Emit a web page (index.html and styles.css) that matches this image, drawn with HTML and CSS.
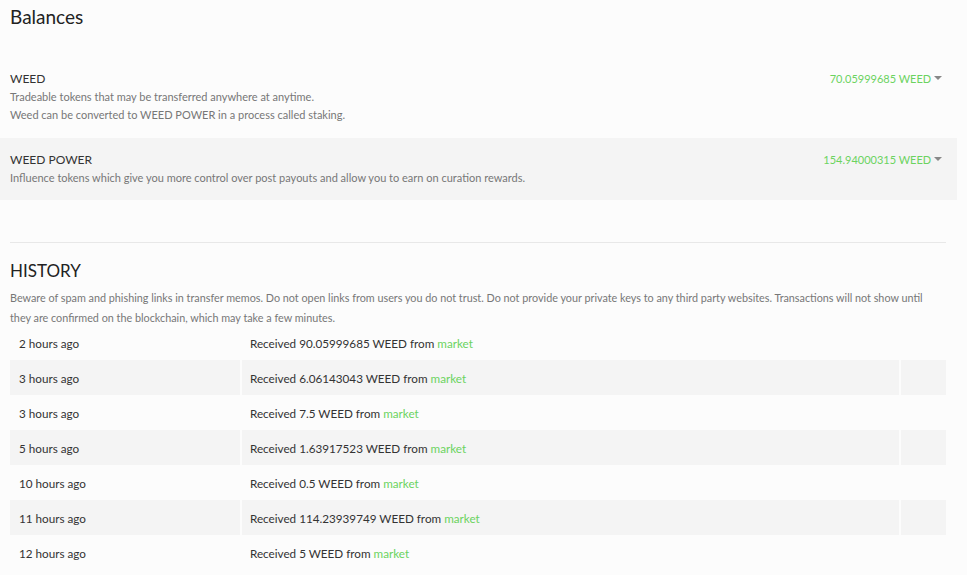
FILE: index.html
```html
<!DOCTYPE html>
<html lang="en">
<head>
    <meta charset="UTF-8">
    <title>Wallet</title>
    <link rel="stylesheet" href="styles.css">
</head>
<body>
    <div class="wallet">
        <h1 class="title">Balances</h1>

        <div class="balance-row">
            <div class="balance-info">
                <div class="balance-name">WEED</div>
                <div class="balance-desc">Tradeable tokens that may be transferred anywhere at anytime.<br>Weed can be converted to WEED POWER in a process called staking.</div>
            </div>
            <div class="balance-amount">70.05999685 WEED <span class="caret"></span></div>
        </div>

        <div class="balance-row shaded">
            <div class="balance-info">
                <div class="balance-name">WEED POWER</div>
                <div class="balance-desc">Influence tokens which give you more control over post payouts and allow you to earn on curation rewards.</div>
            </div>
            <div class="balance-amount">154.94000315 WEED <span class="caret"></span></div>
        </div>

        <div class="history">
            <hr>
            <h2>HISTORY</h2>
            <p class="warning">Beware of spam and phishing links in transfer memos. Do not open links from users you do not trust. Do not provide your private keys to any third party websites. Transactions will not show until they are confirmed on the blockchain, which may take a few minutes.</p>

            <table class="history-table">
                <tr><td>2 hours ago</td><td>Received 90.05999685 WEED from <a href="#">market</a></td><td></td></tr>
                <tr><td>3 hours ago</td><td>Received 6.06143043 WEED from <a href="#">market</a></td><td></td></tr>
                <tr><td>3 hours ago</td><td>Received 7.5 WEED from <a href="#">market</a></td><td></td></tr>
                <tr><td>5 hours ago</td><td>Received 1.63917523 WEED from <a href="#">market</a></td><td></td></tr>
                <tr><td>10 hours ago</td><td>Received 0.5 WEED from <a href="#">market</a></td><td></td></tr>
                <tr><td>11 hours ago</td><td>Received 114.23939749 WEED from <a href="#">market</a></td><td></td></tr>
                <tr><td>12 hours ago</td><td>Received 5 WEED from <a href="#">market</a></td><td></td></tr>
            </table>
        </div>
    </div>
</body>
</html>
```

FILE: styles.css
```css
body {
    margin: 0;
    background: #fcfcfc;
    font-family: 'Lato', sans-serif;
    font-size: 12px;
    color: #333;
}
.wallet {
    width: 957px;
}
.title {
    margin: 0;
    padding: 3px 10px 0;
    height: 54px;
    font-size: 19px;
    font-weight: normal;
    line-height: 28px;
    color: #222;
}
.balance-row {
    display: flex;
    justify-content: space-between;
    padding: 13px 15px 14px 10px;
    line-height: 18px;
}
.balance-row.shaded {
    background: #f4f4f4;
    padding-bottom: 13px;
}
.balance-name {
    color: #333;
}
.balance-desc {
    color: #777;
    font-size: 11px;
}
.balance-amount {
    color: #6bd35f;
    font-size: 11px;
    white-space: nowrap;
}
.caret {
    display: inline-block;
    width: 0;
    height: 0;
    border-left: 4px solid transparent;
    border-right: 4px solid transparent;
    border-top: 4px solid #888;
    vertical-align: middle;
    margin-top: -4px;
}
.history {
    padding: 42px 11px 0 10px;
}
.history hr {
    border: none;
    border-top: 1px solid #e8e8e8;
    margin: 0;
}
.history h2 {
    margin: 17px 0 0;
    font-size: 17px;
    font-weight: normal;
    line-height: 22px;
    color: #222;
}
.warning {
    margin: 6px 0 0;
    font-size: 10.8px;
    line-height: 20px;
    color: #777;
}
.history-table {
    width: 100%;
    border-collapse: collapse;
    margin-top: -3px;
    font-size: 11.7px;
}
.history-table td {
    height: 35px;
    padding: 0 8px;
    border-left: 2px solid #fcfcfc;
    box-sizing: border-box;
}
.history-table td:first-child {
    width: 231px;
    padding-left: 9px;
    border-left: none;
}
.history-table td:last-child {
    width: 46px;
}
.history-table tr:nth-child(even) td {
    background: #f4f4f4;
}
.history-table a {
    color: #6bd35f;
    text-decoration: none;
}
```
